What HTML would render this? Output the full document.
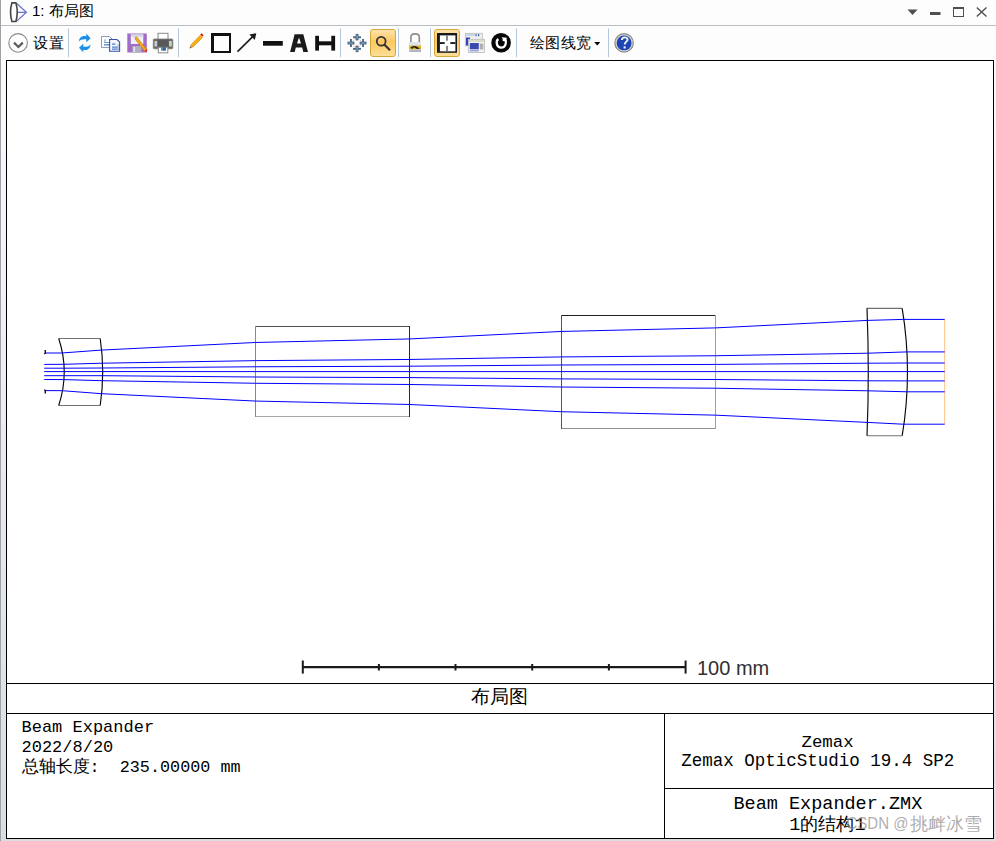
<!DOCTYPE html>
<html><head><meta charset="utf-8">
<style>
html,body{margin:0;padding:0;}
body{width:996px;height:841px;overflow:hidden;position:relative;background:#fdfdfd;font-family:"Liberation Sans",sans-serif;}
.abs{position:absolute;}
#bg{left:1px;top:26px;width:995px;height:815px;background:linear-gradient(#fcfcfc 0px,#fafafa 34px,#f4f5f7 174px,#e7e9ec 474px,#e0e3e6 658px,#dadde1 815px);}
#lb{left:0;top:0;width:1px;height:841px;background:#9ea2a6;}
#tsep{left:1px;top:25px;width:995px;height:1px;background:#babdc2;}
svg text{font-family:"Liberation Sans",sans-serif;}
.mono{font-family:"Liberation Mono",monospace;}
</style></head>
<body>
<div id="bg" class="abs"></div>
<div id="lb" class="abs"></div>
<div id="tsep" class="abs"></div>
<div class="abs" style="left:1px;top:0;width:995px;height:25px;background:#fdfdfd"></div>
<div class="abs" style="left:1px;top:26px;width:995px;height:34px;background:#fdfdfd"></div>

<svg class="abs" style="left:0;top:0" width="996" height="841" viewBox="0 0 996 841">
  <!-- frame -->
  <rect x="6.5" y="60.5" width="987" height="778" fill="#fff" stroke="#000" stroke-width="1" shape-rendering="crispEdges"/>
  <g stroke="#000" stroke-width="1" shape-rendering="crispEdges">
    <line x1="6" y1="683.5" x2="994" y2="683.5"/>
    <line x1="6" y1="713.5" x2="994" y2="713.5"/>
    <line x1="664.5" y1="713" x2="664.5" y2="839"/>
    <line x1="664" y1="788.5" x2="994" y2="788.5"/>
  </g>

  <!-- rectangles -->
  <g stroke-width="1" shape-rendering="crispEdges" fill="none">
    <line x1="255" y1="326.5" x2="410" y2="326.5" stroke="#505050"/>
    <line x1="255" y1="416.5" x2="410" y2="416.5" stroke="#a8a8a8"/>
    <line x1="255.5" y1="326" x2="255.5" y2="417" stroke="#888"/>
    <line x1="409.5" y1="326" x2="409.5" y2="417" stroke="#282828"/>
    <line x1="561" y1="315.5" x2="716" y2="315.5" stroke="#202020"/>
    <line x1="561" y1="428.5" x2="716" y2="428.5" stroke="#909090"/>
    <line x1="561.5" y1="315" x2="561.5" y2="429" stroke="#555"/>
    <line x1="715.5" y1="315" x2="715.5" y2="429" stroke="#a0a0a0"/>
  </g>

  <!-- lenses -->
  <g fill="none" stroke="#080808" stroke-width="1.15">
    <path d="M58.7 338.5 L100.2 338.5" stroke="#707070"/>
    <path d="M58.7 405.5 L100.2 405.5" stroke="#707070"/>
    <path d="M58.7 338.5 A106.6 106.6 0 0 1 58.7 405.5"/>
    <path d="M100.2 338.5 A225.7 225.7 0 0 1 100.2 405.5"/>
    <path d="M867 308.3 L902.2 308.3" stroke="#707070"/>
    <path d="M867 435.7 L902.2 435.7" stroke="#707070"/>
    <path d="M867 308.3 A1576 1576 0 0 1 867 435.7"/>
    <path d="M902.2 308.3 A389 389 0 0 1 902.2 435.7"/>
  </g>
  <!-- object ticks -->
  <g stroke="#101010" stroke-width="1.4" fill="none">
    <path d="M45.3 350 L45.3 353.2 L44.2 353.8"/>
    <path d="M44.2 389.8 L45.3 390.4 L45.3 393.6"/>
  </g>
  <!-- image plane -->
  <line x1="944.6" y1="319.6" x2="944.6" y2="424.3" stroke="#ffc890" stroke-width="1.1"/>

  <!-- rays -->
  <g fill="none" stroke="#0000ff" stroke-width="1">
    <polyline points="45.0,353.00 61.7,353.00 101.0,350.10 255.5,342.47 409.5,338.94 561.5,331.44 715.5,327.90 867.5,320.40 903.5,319.40 944.7,319.40"/>
    <polyline points="44.2,364.40 63.5,364.30 102.5,363.20 255.5,360.65 409.5,359.46 561.5,356.93 715.5,355.74 868.3,353.20 907.0,351.90 944.7,351.90"/>
    <polyline points="44.2,368.20 64.0,368.20 102.7,368.00 255.5,366.78 409.5,366.21 561.5,364.99 715.5,364.42 868.3,363.20 907.3,363.00 944.7,363.00"/>
    <polyline points="44.2,371.60 64.0,371.60 102.7,371.60 255.5,371.60 409.5,371.60 561.5,371.60 715.5,371.60 868.3,371.60 907.3,371.60 944.7,371.60"/>
    <polyline points="44.2,375.70 64.0,375.70 102.7,375.70 255.5,377.00 409.5,377.60 561.5,378.90 715.5,379.50 868.3,380.80 907.3,380.90 944.7,380.90"/>
    <polyline points="44.2,379.50 63.5,379.60 102.5,380.70 255.5,383.27 409.5,384.47 561.5,387.03 715.5,388.23 868.3,390.80 907.0,391.80 944.7,391.80"/>
    <polyline points="45.0,390.60 62.3,390.70 101.5,393.70 255.5,401.05 409.5,404.47 561.5,411.73 715.5,415.15 867.3,422.40 903.0,424.20 944.7,424.20"/>
  </g>


  <!-- scale bar -->
  <g stroke="#1a1a1a" fill="none">
    <line x1="302.5" y1="667.2" x2="686" y2="667.2" stroke-width="2.2"/>
    <line x1="302.8" y1="660.5" x2="302.8" y2="673.6" stroke-width="2"/>
    <line x1="685.6" y1="660.5" x2="685.6" y2="673.6" stroke-width="2"/>
    <line x1="378.9" y1="664" x2="378.9" y2="670.5" stroke-width="2"/>
    <line x1="455.5" y1="664" x2="455.5" y2="670.5" stroke-width="2"/>
    <line x1="532.2" y1="664" x2="532.2" y2="670.5" stroke-width="2"/>
    <line x1="608.9" y1="664" x2="608.9" y2="670.5" stroke-width="2"/>
  </g>
  <text x="697" y="674.8" font-size="20" fill="#303030">100 mm</text>

  <!-- bottom texts -->
  <text x="499.5" y="703" font-size="19" text-anchor="middle" fill="#000">布局图</text>
  <g class="mono" fill="#000" style="white-space:pre">
    <text x="21.5" y="731.5" font-size="17" class="mono">Beam Expander</text>
    <text x="21.5" y="751.5" font-size="17" class="mono">2022/8/20</text>
    <text x="21.5" y="771.5" font-size="16.8" class="mono" xml:space="preserve">总轴长度:  235.00000 mm</text>
    <text x="801.5" y="747" font-size="17.4" class="mono">Zemax</text>
    <text x="681.3" y="766.4" font-size="17.5" class="mono">Zemax OpticStudio 19.4 SP2</text>
    <text x="733.5" y="809" font-size="18.5" class="mono">Beam Expander.ZMX</text>
    <text x="789.3" y="830" font-size="18.5" class="mono">1<tspan font-size="17.9">的结构</tspan>1</text>
  </g>
  <g fill="#8c8c8c" fill-opacity="0.72">
    <text x="846.5" y="829" font-size="16.5" textLength="62" lengthAdjust="spacingAndGlyphs">CSDN @</text>
    <text x="909.5" y="829.5" font-size="17.6">挑衅冰雪</text>
  </g>
</svg>


<svg class="abs" style="left:0;top:0" width="996" height="60" viewBox="0 0 996 60">
  <!-- title icon: lens + triangle -->
  <g fill="none">
    <path d="M17.8 12.3 L25.5 12.3 M16.4 3.2 L26.4 12.3 L16.4 21.4" stroke="#6a72c6" stroke-width="1.25"/>
    <path d="M11.9 2.9 L15.9 2.9 Q18.6 12.2 15.9 21.5 L11.9 21.5 Q9.2 12.2 11.9 2.9 Z" stroke="#454545" stroke-width="1.6"/>
  </g>
  <!-- title right controls -->
  <path d="M907.5 9.6 L917.6 9.6 L912.55 15 Z" fill="#505050"/>
  <rect x="930" y="12" width="10.5" height="3" fill="#505050"/>
  <rect x="953.5" y="7.5" width="10" height="9" fill="none" stroke="#505050" stroke-width="1"/>
  <rect x="953" y="7" width="11" height="2" fill="#505050"/>
  <path d="M976.8 7.5 L986.5 16.5 M986.5 7.5 L976.8 16.5" stroke="#505050" stroke-width="1.4"/>

  <!-- separators -->
  <g fill="#b4c6da">
    <rect x="68" y="28.5" width="1" height="28.5"/>
    <rect x="178" y="28.5" width="1" height="28.5"/>
    <rect x="340" y="28.5" width="1" height="28.5"/>
    <rect x="398" y="28.5" width="1" height="28.5"/>
    <rect x="430" y="28.5" width="1" height="28.5"/>
    <rect x="516" y="28.5" width="1" height="28.5"/>
    <rect x="608" y="28.5" width="1" height="28.5"/>
  </g>

  <!-- settings circle -->
  <circle cx="18.1" cy="42.9" r="9.3" fill="#fff" stroke="#8a8a8a" stroke-width="1.1"/>
  <path d="M14 42.6 L18.4 47 L22.8 42.6" fill="none" stroke="#5c5c5c" stroke-width="2.2"/>

  <!-- refresh -->
  <g fill="#1e8fe6">
    <path d="M78.8 41.5 C79.5 36.5 83 35.5 86.3 36.3 L86.3 33.5 L90.6 38.3 L86.3 42.3 L86.3 39.3 C83 38.8 80.5 39.5 78.8 41.5 Z"/>
    <path d="M90.6 44.2 C90 49.5 86.5 50.5 83.3 49.7 L83.3 52.3 L79 47.8 L83.3 43.8 L83.3 46.7 C86.5 47.2 89 46.5 90.6 44.2 Z"/>
  </g>

  <!-- copy -->
  <g>
    <path d="M101.5 36.5 L109.5 36.5 L112 39 L112 47.5 L101.5 47.5 Z" fill="#fff" stroke="#8a9cc0" stroke-width="1"/>
    <rect x="104" y="39.5" width="2" height="2" fill="#9cc4f0"/>
    <rect x="104" y="42" width="6" height="1" fill="#6a9ad8"/>
    <rect x="104" y="44" width="6" height="1.6" fill="#6a9ad8"/>
    <path d="M109.6 39.5 L117 39.5 L119.6 42 L119.6 51.3 L109.6 51.3 Z" fill="#f4f6fa" stroke="#2e56b0" stroke-width="1.1"/>
    <rect x="112" y="43.5" width="3.5" height="1.2" fill="#4a7ad0"/>
    <rect x="112" y="46.5" width="6" height="1.2" fill="#4a7ad0"/>
    <rect x="112" y="48.5" width="6" height="1.2" fill="#4a7ad0"/>
    <rect x="117.5" y="44" width="1.5" height="6.5" fill="#b8c4d8"/>
  </g>

  <!-- save with pencil -->
  <g>
    <rect x="127.3" y="33.5" width="19.5" height="19" fill="#a06cc8"/>
    <rect x="130.8" y="34.5" width="12.5" height="9.5" fill="#eef2fa"/>
    <rect x="130.8" y="34.5" width="12.5" height="2.5" fill="#d4d8e0"/>
    <rect x="132.3" y="46" width="9" height="6.5" fill="#b0b0c0"/>
    <rect x="133.5" y="47" width="1.5" height="5" fill="#e8e8f0"/>
    <path d="M135.3 37 L137 37.3 L147 49.8 L145.2 51.8 L135 39 Z" fill="#f4a818" stroke="#c87810" stroke-width="0.6"/>
    <path d="M144.8 50.5 L147.2 49.2 L146.6 52.4 Z" fill="#e01818"/>
  </g>

  <!-- printer -->
  <g>
    <rect x="158" y="33.3" width="10" height="6.5" fill="#fff" stroke="#888" stroke-width="1"/>
    <rect x="153.3" y="39" width="19.5" height="9.8" rx="1" fill="#6a6a6a" stroke="#7a7a7a" stroke-width="0.8"/>
    <rect x="154.5" y="41" width="2.8" height="5.5" fill="#c8ccd4"/>
    <rect x="169" y="41" width="2.8" height="5.5" fill="#c8ccd4"/>
    <rect x="170.2" y="43.5" width="1.4" height="2.3" fill="#8ee070"/>
    <rect x="157.5" y="39.8" width="11" height="8" fill="#585858"/>
    <rect x="158.3" y="47.3" width="9.5" height="5.5" fill="#fff" stroke="#8a8a8a" stroke-width="1"/>
    <rect x="161" y="47.3" width="1.6" height="3.4" fill="#3a90e8"/>
    <rect x="162.6" y="47.3" width="1.6" height="3.4" fill="#207040"/>
    <rect x="164.2" y="47.3" width="1.6" height="3.4" fill="#1a4a90"/>
  </g>

  <!-- pencil -->
  <path d="M190 47.8 L191 44.8 L200.3 35.2 L202.6 37.4 L193.2 46.8 Z" fill="#f8b010" stroke="#d88a18" stroke-width="0.7"/>
  <path d="M200.2 34.6 L201.7 33.2 L203.6 35.2 L202.4 36.6 Z" fill="#d81818"/>
  <path d="M189.6 48.6 L190.4 46.3 L191.9 47.8 Z" fill="#707070"/>

  <!-- square -->
  <path d="M211 33 L231 33 L231 53 L211 53 Z M214 36 L229 36 L229 51 L214 51 Z" fill="#111" fill-rule="evenodd"/>

  <!-- arrow -->
  <line x1="237.5" y1="51.6" x2="253" y2="36.4" stroke="#1a1a1a" stroke-width="1.6"/>
  <path d="M249.3 34.6 L256.3 33.2 L254.8 40.1 Z" fill="#1a1a1a"/>

  <!-- thick line -->
  <rect x="263" y="41" width="19.8" height="4.7" fill="#111"/>

  <!-- A -->
  <path d="M294.6 34.2 L303.3 34.2 L308 51.9 L303.3 51.9 L302.2 47.6 L295.8 47.6 L294.7 51.9 L290.1 51.9 Z M297 43.6 L301 43.6 L299 37.6 Z" fill="#1a1a1a" fill-rule="evenodd"/>

  <!-- H dimension -->
  <rect x="315.2" y="35.8" width="3.8" height="14.8" fill="#111"/>
  <rect x="331.3" y="35.8" width="3.8" height="14.8" fill="#111"/>
  <rect x="318" y="41.3" width="14" height="4" fill="#111"/>

  <!-- move icon -->
  <path d="M357 37 L363 43 L357 49 L351 43 Z" fill="none" stroke="#e8a8b0" stroke-width="0.9" stroke-dasharray="1.2 1"/>
  <g fill="#4a6c86">
    <rect x="355.6" y="33.9" width="2.9" height="6.5"/>
    <rect x="353" y="36.3" width="8" height="1.9"/>
    <rect x="355.6" y="45.6" width="2.9" height="6.5"/>
    <rect x="353" y="47.9" width="8" height="1.9"/>
    <rect x="347.5" y="41.6" width="6.9" height="2.9"/>
    <rect x="350" y="39" width="1.9" height="8"/>
    <rect x="359.6" y="41.6" width="6.9" height="2.9"/>
    <rect x="362.1" y="39" width="1.9" height="8"/>
  </g>
  <g fill="#8aa6ba">
    <rect x="356.5" y="35" width="1.1" height="4"/>
    <rect x="356.5" y="47" width="1.1" height="4"/>
    <rect x="349" y="42.5" width="4" height="1.1"/>
    <rect x="361" y="42.5" width="4" height="1.1"/>
  </g>

  <!-- zoom button (highlighted) -->
  <defs>
    <linearGradient id="hl" x1="0" y1="0" x2="0" y2="1">
      <stop offset="0" stop-color="#fde4b0"/>
      <stop offset="0.45" stop-color="#fcc860"/>
      <stop offset="1" stop-color="#fde09a"/>
    </linearGradient>
  </defs>
  <rect x="370.5" y="29.5" width="25" height="27" rx="2.5" fill="url(#hl)" stroke="#d4a838" stroke-width="1"/>
  <circle cx="381.2" cy="41.3" r="4.4" fill="none" stroke="#333" stroke-width="1.8"/>
  <path d="M384.3 44.5 L390 50.2" stroke="#333" stroke-width="2.2"/>

  <!-- lock -->
  <g>
    <path d="M410.9 42.5 L410.9 37 C410.9 32.8 419.3 32.8 419.3 37 L419.3 42.5" fill="none" stroke="#8c8c8c" stroke-width="1.6"/>
    <rect x="409.2" y="42" width="11.8" height="9.6" fill="#c8ccd4"/>
    <rect x="409.2" y="42" width="11.8" height="3.2" fill="#e2e4e8"/>
    <rect x="409.2" y="45.7" width="11.8" height="3.4" fill="#e0b418"/>
    <path d="M410.5 47.5 L413.5 45.9 L416 46.2 L420 48.6 L417 48.9 L414 47.3 L412 48.9 Z" fill="#1a1a1a"/>
    <rect x="409.2" y="50.6" width="11.8" height="1" fill="#9a9a9a"/>
  </g>

  <!-- layout button highlighted -->
  <rect x="434.5" y="29.5" width="25" height="27" rx="2.5" fill="url(#hl)" stroke="#d4a838" stroke-width="1"/>
  <rect x="437" y="33" width="20" height="19.8" fill="#1a1a1e"/>
  <rect x="439.9" y="35.4" width="15.5" height="15.9" fill="#fff"/>
  <rect x="439.9" y="42.1" width="4.8" height="1.9" fill="#1e1e1e"/>
  <rect x="450.3" y="42.1" width="5.1" height="1.9" fill="#1e1e1e"/>
  <rect x="446.1" y="35.4" width="1.8" height="5.3" fill="#7a7a7e"/>
  <rect x="446.1" y="45.9" width="1.8" height="5.4" fill="#7a7a7e"/>
  <!-- windows icon -->
  <g>
    <rect x="465.3" y="33.3" width="17" height="12.5" fill="#f0f0f0" stroke="#b8b8b8" stroke-width="0.8"/>
    <rect x="465.8" y="34" width="9" height="2" fill="#c8d4e8"/>
    <rect x="475.5" y="34.2" width="1.2" height="2" fill="#2e5a9a"/>
    <rect x="478" y="34.2" width="1.2" height="2" fill="#2e5a9a"/>
    <rect x="466" y="37.5" width="4" height="8" fill="#3040b8"/>
    <rect x="468.3" y="39.3" width="16.2" height="13.2" fill="#f4f4f4" stroke="#b8b8b8" stroke-width="0.8"/>
    <rect x="469" y="40" width="15" height="2" fill="#dcdcc8"/>
    <rect x="469.8" y="43" width="9" height="6.3" fill="#3a48b0"/>
    <rect x="479.8" y="43.5" width="3.5" height="6" fill="#b0b0b0"/>
    <rect x="469.8" y="50" width="9" height="1.5" fill="#9aa8e0"/>
  </g>

  <!-- black circle icon -->
  <circle cx="501.1" cy="42.8" r="9.8" fill="#060606"/>
  <path d="M498.3 39 C495.8 41 496 47.6 501.2 47.6 C506.2 47.6 506.8 41.5 505 39" fill="none" stroke="#fff" stroke-width="2.3"/>
  <path d="M501.8 37.3 L506.8 37.8 L505.8 41.5 L502.2 41 Z" fill="#fff"/>
  <path d="M498.4 42.5 L502.6 42 L502.6 38 Z" fill="#060606"/>

  <!-- dropdown triangle -->
  <path d="M594.3 42.1 L600.3 42.1 L597.3 45.6 Z" fill="#000"/>

  <!-- help -->
  <circle cx="624.1" cy="42.9" r="9.2" fill="#d0d0d0" stroke="#8c8c8c" stroke-width="1.2"/>
  <circle cx="624.1" cy="42.9" r="7.4" fill="#1c44b4"/>
  <path d="M621.9 39.9 C621.9 36.6 627.6 36.6 627.6 39.7 C627.6 41.6 624.7 41.8 624.7 44.6" fill="none" stroke="#f4f4f4" stroke-width="1.9"/>
  <rect x="623.6" y="46.4" width="2.1" height="2.1" fill="#f4f4f4"/>
</svg>

<!-- title bar -->
<div class="abs" style="left:32px;top:0px;font-size:15px;line-height:22px;color:#000">1: 布局图</div>
<!-- toolbar text -->
<div class="abs" style="left:33px;top:33px;font-size:15px;line-height:20px;letter-spacing:0.5px;color:#000">设置</div>
<div class="abs" style="left:529.5px;top:33px;font-size:15.3px;line-height:20px;letter-spacing:0.6px;color:#000">绘图线宽</div>
</body></html>
